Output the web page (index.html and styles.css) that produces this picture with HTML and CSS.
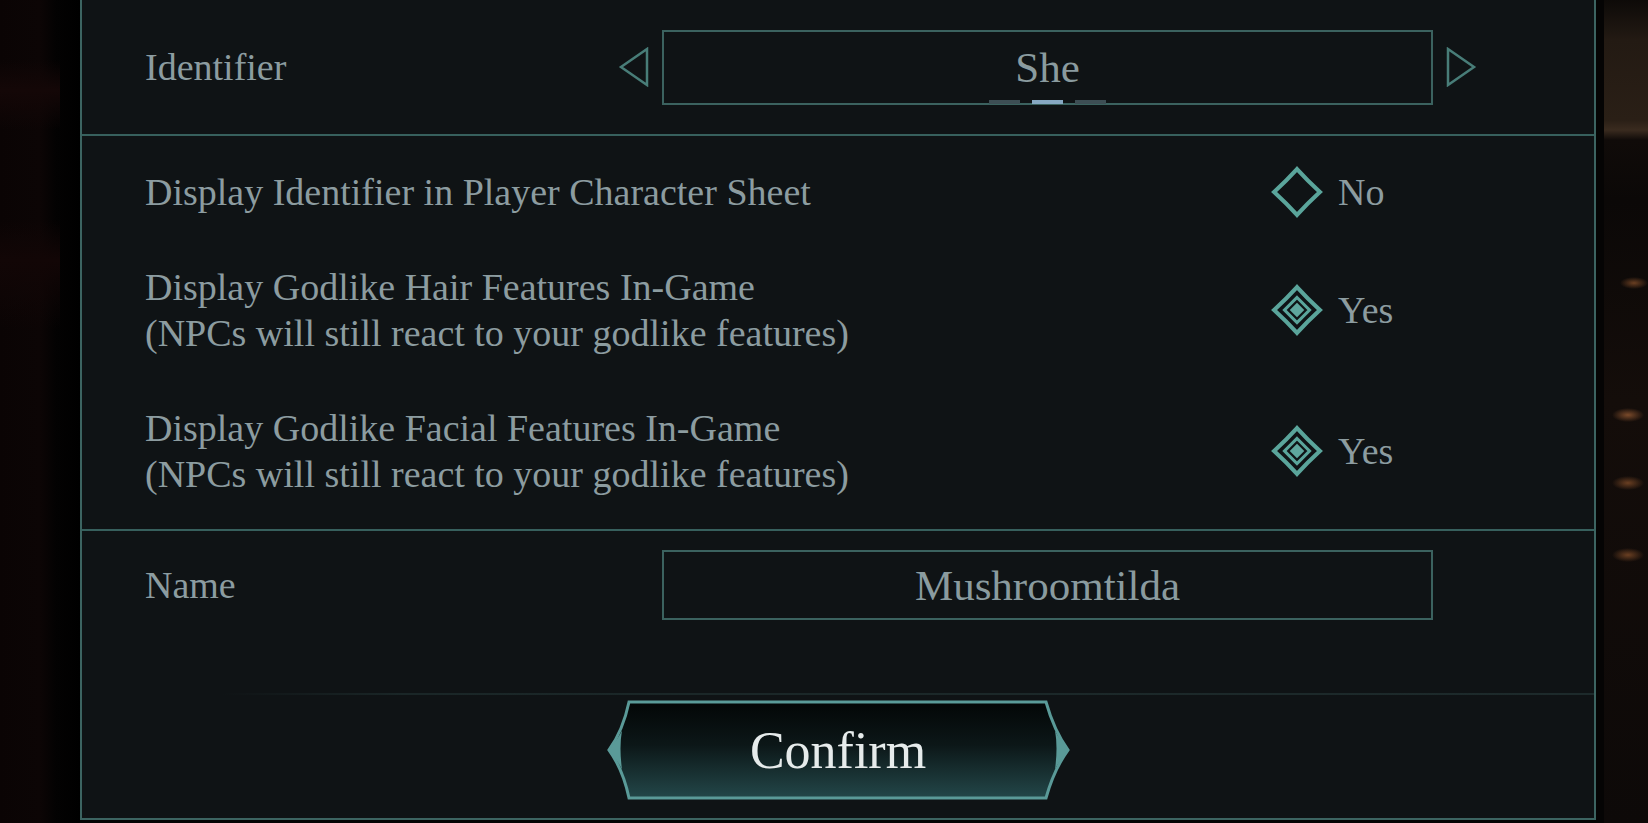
FILE: index.html
```html
<!DOCTYPE html>
<html lang="en">

<head>
  <meta charset="UTF-8">
  <title>Character Identity</title>
  <link rel="stylesheet" href="styles.css">
</head>

<body>
  <div class="scene">
    <div class="side side-left"></div>

    <div class="panel">
      <!-- identifier picker -->
      <div class="section ident">
        <div class="label">Identifier</div>
        <div class="picker">
          <svg class="arrow" width="31" height="40" viewBox="0 0 31 40">
            <path d="M29 2 L3 20 L29 38 Z" />
          </svg>
          <div class="field">
            <span>She</span>
            <div class="dots">
              <i></i><i class="on"></i><i></i>
            </div>
          </div>
          <svg class="arrow" width="31" height="40" viewBox="0 0 31 40">
            <path d="M2 2 L28 20 L2 38 Z" />
          </svg>
        </div>
      </div>
      <!-- end ident -->

      <div class="section options">
        <div class="opt">
          <div class="label">Display Identifier in Player Character Sheet</div>
          <div class="toggle">
            <svg class="diamond" width="52" height="52" viewBox="0 0 50 50">
              <path class="outer" d="M25 3 Q35 14 47 25 Q35 36 25 47 Q15 36 3 25 Q15 14 25 3 Z" />
            </svg>
            <span>No</span>
          </div>
        </div>
        <div class="opt">
          <div class="label">Display Godlike Hair Features In-Game<br>(NPCs will still react to your godlike features)</div>
          <div class="toggle">
            <svg class="diamond" width="52" height="52" viewBox="0 0 50 50">
              <path class="outer" d="M25 3 Q35 14 47 25 Q35 36 25 47 Q15 36 3 25 Q15 14 25 3 Z" />
              <path class="inner" d="M25 13 L37 25 L25 37 L13 25 Z" />
              <path class="core" d="M25 18 L32 25 L25 32 L18 25 Z" />
            </svg>
            <span>Yes</span>
          </div>
        </div>
        <div class="opt">
          <div class="label">Display Godlike Facial Features In-Game<br>(NPCs will still react to your godlike features)</div>
          <div class="toggle">
            <svg class="diamond" width="52" height="52" viewBox="0 0 50 50">
              <path class="outer" d="M25 3 Q35 14 47 25 Q35 36 25 47 Q15 36 3 25 Q15 14 25 3 Z" />
              <path class="inner" d="M25 13 L37 25 L25 37 L13 25 Z" />
              <path class="core" d="M25 18 L32 25 L25 32 L18 25 Z" />
            </svg>
            <span>Yes</span>
          </div>
        </div>
      </div>
      <!-- end options -->

      <div class="section name">
        <div class="label">Name</div>
        <div class="picker">
          <div class="arrow-space"></div>
          <div class="field name-field"><span>Mushroomtilda</span></div>
        </div>
      </div>

      <div class="confirm-area">
        <button class="confirm" type="button">
          <svg class="confirm-bg" width="465" height="100" viewBox="0 0 465 98" preserveAspectRatio="none">
            <defs>
              <linearGradient id="btnFill" x1="0" y1="0" x2="0" y2="1">
                <stop offset="0" stop-color="#030606" />
                <stop offset="0.45" stop-color="#0c1718" />
                <stop offset="1" stop-color="#234749" />
              </linearGradient>
            </defs>
            <path d="M23 2 L440 2 Q448 30 462 49 Q448 68 440 96 L23 96 Q17 68 3 49 Q17 30 23 2 Z"
              fill="url(#btnFill)" stroke="#5a9a98" stroke-width="3" />
            <path d="M3 49 Q12 38 16 30 Q13 46 16 68 Q12 60 3 49 Z" fill="#5a9a98" />
            <path d="M462 49 Q453 38 449 30 Q452 46 449 68 Q453 60 462 49 Z" fill="#5a9a98" />
          </svg>
          <span>Confirm</span>
        </button>
      </div>
    </div>
    <!-- end panel -->

    <div class="side side-right"></div>
  </div>
</body>

</html>
```

FILE: styles.css
```css
* {
  box-sizing: border-box;
}

body {
  margin: 0;
  background: #040303;
  font-family: "Liberation Serif", "DejaVu Serif", serif;
  overflow: hidden;
}

.scene {
  display: flex;
  width: 1648px;
  height: 823px;
}

.side-left {
  width: 80px;
  background:
    linear-gradient(to bottom, transparent 0, transparent 60px, #140707 90px, transparent 130px, transparent 220px, #120606 260px, transparent 330px) left top / 60px 100% no-repeat,
    linear-gradient(to right, #0a0404 0, #0c0505 40px, #030202 56px, #000 80px);
}

.side-right {
  flex: 1;
  background:
    radial-gradient(ellipse 14px 6px at 30px 283px, #6a3f22 0, transparent 100%),
    radial-gradient(ellipse 16px 7px at 24px 415px, #7a4a2a 0, transparent 100%),
    radial-gradient(ellipse 16px 7px at 24px 483px, #6a3f22 0, transparent 100%),
    radial-gradient(ellipse 16px 7px at 24px 555px, #6a3f22 0, transparent 100%),
    linear-gradient(to bottom, #0d0a08 0, #231a13 40px, #2a1f16 120px, #3a2b1f 130px, #100b09 140px, #0b0807 200px, #140d0a 400px, #0d0908 823px);
  border-left: 8px solid #050404;
}

.panel {
  width: 1516px;
  height: 820px;
  background: #0f1315;
  border-left: 2px solid #3c6461;
  border-right: 2px solid #3c6461;
  border-bottom: 2px solid #3c6461;
  display: flex;
  flex-direction: column;
  color: #8c9ca0;
  font-size: 38px;
}

.label {
  padding-left: 63px;
}

.section {
  display: flex;
  align-items: center;
}

.section > .label {
  width: 536px;
}

/* identifier */
.ident {
  height: 136px;
  border-bottom: 2px solid #37605d;
}

.picker {
  display: flex;
  align-items: center;
  gap: 13px;
}

.arrow path {
  fill: none;
  stroke: #487d78;
  stroke-width: 2.5;
  stroke-linejoin: miter;
}

.arrow-space {
  width: 31px;
}

.field {
  position: relative;
  width: 771px;
  height: 75px;
  border: 2px solid #3b625f;
  display: flex;
  align-items: center;
  justify-content: center;
  color: #8a9b9f;
  font-size: 43px;
}

.dots {
  position: absolute;
  bottom: -1px;
  left: 0;
  right: 0;
  display: flex;
  justify-content: center;
  gap: 12px;
}

.dots i {
  width: 31px;
  height: 4px;
  background: #3d4e54;
}

.dots i.on {
  background: #86a8c2;
}

/* options */
.options {
  flex-direction: column;
  align-items: stretch;
  gap: 49px;
  padding: 33px 0 32px;
  border-bottom: 2px solid #37605d;
  line-height: 46px;
}

.opt {
  display: flex;
  align-items: center;
}

.opt .label {
  width: 1189px;
}

.toggle {
  display: flex;
  align-items: center;
  gap: 15px;
}

.diamond {
  margin: -3px 0;
}

.diamond .outer {
  fill: none;
  stroke: #5aa59b;
  stroke-width: 4;
}

.diamond .inner {
  fill: none;
  stroke: #5aa59b;
  stroke-width: 3;
}

.diamond .core {
  fill: #5fa69d;
}

/* name */
.name {
  height: 162px;
  align-items: flex-start;
  padding-top: 19px;
}

.name .label {
  line-height: 70px;
}

.name-field {
  height: 70px;
}

/* confirm */
.confirm-area {
  flex: 1;
  display: flex;
  justify-content: center;
  padding-top: 7px;
  background: linear-gradient(to right, transparent 140px, #1a2627 320px, #1d2a2b 100%) top left / 100% 2px no-repeat;
}

.confirm {
  position: relative;
  width: 465px;
  height: 100px;
  border: 0;
  padding: 0;
  background: none;
  font-family: inherit;
  font-size: 52px;
  color: #e6ebeb;
}

.confirm-bg {
  position: absolute;
  left: 0;
  top: 0;
}

.confirm span {
  position: relative;
}
```
